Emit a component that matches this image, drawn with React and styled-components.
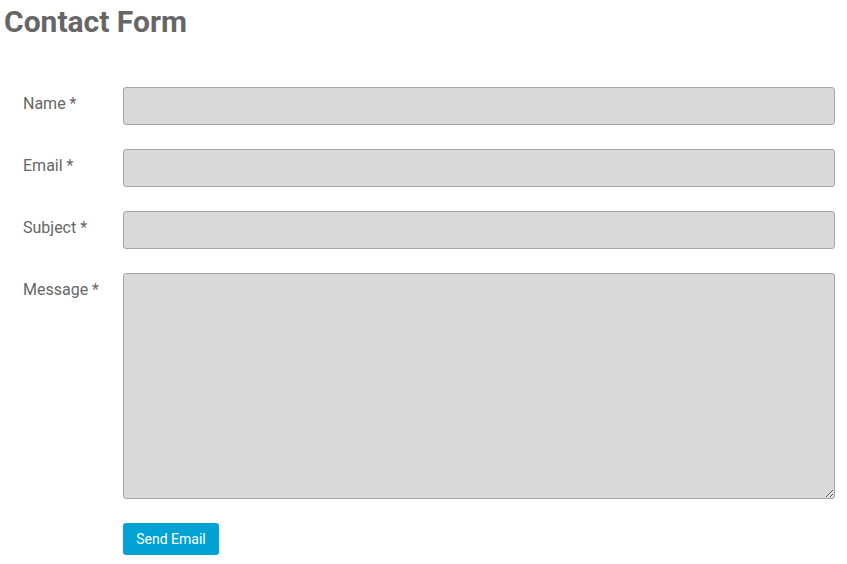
import React from "react"
import styled, { createGlobalStyle } from "styled-components"

const GlobalStyle = createGlobalStyle`
  html, body {
    margin: 0;
    padding: 0;
    background: #fff;
  }
  body {
    font-family: Roboto, "Liberation Sans", sans-serif;
    color: #666;
  }
`

const Page = styled.div`
  padding: 0 12px 0 4px;
`

const Title = styled.h1`
  margin: 0;
  padding-top: 4px;
  font-size: 30px;
  line-height: 36px;
  font-weight: 700;
  color: #666;
`

const Form = styled.form`
  display: flex;
  flex-direction: column;
  gap: 24px;
  padding: 47px 0 0 19px;
`

const Row = styled.div`
  display: flex;
  align-items: flex-start;
`

const Label = styled.label`
  width: 100px;
  flex: none;
  font-size: 16px;
  line-height: 24px;
  padding-top: 5px;
  color: #666;
`

const Field = styled.input`
  flex: 1;
  height: 38px;
  box-sizing: border-box;
  margin: 0;
  background: #d9d9d9;
  border: 1px solid #a6a6a6;
  border-radius: 3px;
  font: inherit;
  padding: 6px 10px;
  outline: none;
`

const Area = styled.textarea`
  flex: 1;
  height: 226px;
  box-sizing: border-box;
  margin: 0;
  background: #d9d9d9;
  border: 1px solid #a6a6a6;
  border-radius: 3px;
  font: inherit;
  padding: 6px 10px;
  resize: vertical;
  outline: none;
`

const Actions = styled.div`
  padding-left: 100px;
`

const Button = styled.button`
  height: 32px;
  width: 96px;
  border: none;
  border-radius: 3px;
  background: #00a3d4;
  color: #fff;
  font-family: Roboto, "Liberation Sans", sans-serif;
  font-size: 14px;
  padding: 0;
  cursor: pointer;
`

const fields = [
  { id: "name", label: "Name *" },
  { id: "email", label: "Email *" },
  { id: "subject", label: "Subject *" },
]

export default function App() {
  return (
    <Page>
      <GlobalStyle />
      <Title>Contact Form</Title>
      <Form onSubmit={e => e.preventDefault()}>
        {fields.map(f => (
          <Row key={f.id}>
            <Label htmlFor={f.id}>{f.label}</Label>
            <Field id={f.id} type="text" />
          </Row>
        ))}
        <Row>
          <Label htmlFor="message">Message *</Label>
          <Area id="message" />
        </Row>
        <Actions>
          <Button type="submit">Send Email</Button>
        </Actions>
      </Form>
    </Page>
  )
}
